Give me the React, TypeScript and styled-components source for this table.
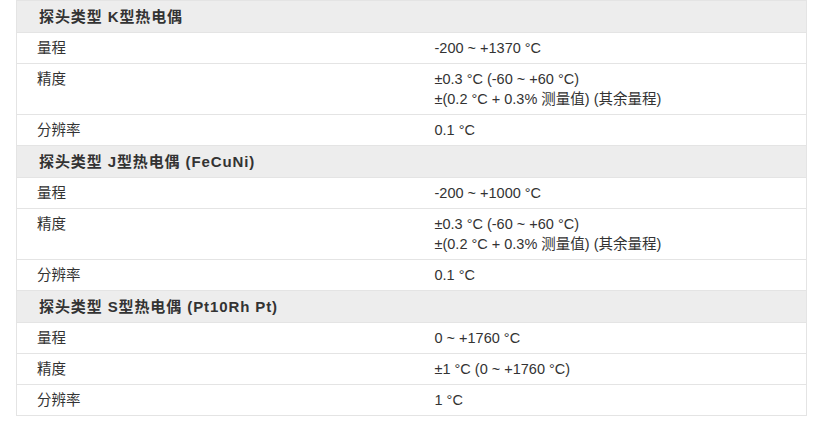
import React from "react";
import styled, { createGlobalStyle } from "styled-components";

const Global = createGlobalStyle`
  html, body { margin: 0; padding: 0; background: #ffffff; }
  body {
    font-family: "Liberation Sans", Arial, "Noto Sans CJK SC", sans-serif;
    font-size: 14.5px;
    color: #333333;
  }
`;

const Page = styled.div`
  padding: 0 0 0 16px;
`;

const Table = styled.table`
  width: 791px;
  border-collapse: collapse;
  table-layout: fixed;
  border: 1px solid #e4e4e4;
`;

const LabelCol = styled.col`
  width: 398px;
`;

const ValueCol = styled.col`
  width: auto;
`;

const HeadCell = styled.th`
  background: #ededed;
  text-align: left;
  font-weight: bold;
  font-size: 15px;
  letter-spacing: 0.9px;
  padding: 6px 22px 5px;
  line-height: 20px;
  color: #333333;
  border-bottom: 1px solid #e4e4e4;
`;

const Row = styled.tr`
  border-bottom: 1px solid #e4e4e4;
`;

const Cell = styled.td`
  padding: 5px 20px;
  line-height: 20px;
  vertical-align: top;
  color: #333333;
`;

type Item = { label: string; value: string[] };
type Group = { title: string; items: Item[] };

const groups: Group[] = [
  {
    title: "探头类型 K型热电偶",
    items: [
      { label: "量程", value: ["-200 ~ +1370 °C"] },
      { label: "精度", value: ["±0.3 °C (-60 ~ +60 °C)", "±(0.2 °C + 0.3% 测量值) (其余量程)"] },
      { label: "分辨率", value: ["0.1 °C"] },
    ],
  },
  {
    title: "探头类型 J型热电偶 (FeCuNi)",
    items: [
      { label: "量程", value: ["-200 ~ +1000 °C"] },
      { label: "精度", value: ["±0.3 °C (-60 ~ +60 °C)", "±(0.2 °C + 0.3% 测量值) (其余量程)"] },
      { label: "分辨率", value: ["0.1 °C"] },
    ],
  },
  {
    title: "探头类型 S型热电偶 (Pt10Rh Pt)",
    items: [
      { label: "量程", value: ["0 ~ +1760 °C"] },
      { label: "精度", value: ["±1 °C (0 ~ +1760 °C)"] },
      { label: "分辨率", value: ["1 °C"] },
    ],
  },
];

export default function App() {
  return (
    <>
      <Global />
      <Page>
        <Table>
          <colgroup>
            <LabelCol />
            <ValueCol />
          </colgroup>
          <tbody>
            {groups.map((g) => (
              <React.Fragment key={g.title}>
                <tr>
                  <HeadCell colSpan={2}>{g.title}</HeadCell>
                </tr>
                {g.items.map((it) => (
                  <Row key={it.label}>
                    <Cell>{it.label}</Cell>
                    <Cell>
                      {it.value.map((v, i) => (
                        <React.Fragment key={i}>
                          {i > 0 && <br />}
                          {v}
                        </React.Fragment>
                      ))}
                    </Cell>
                  </Row>
                ))}
              </React.Fragment>
            ))}
          </tbody>
        </Table>
      </Page>
    </>
  );
}
